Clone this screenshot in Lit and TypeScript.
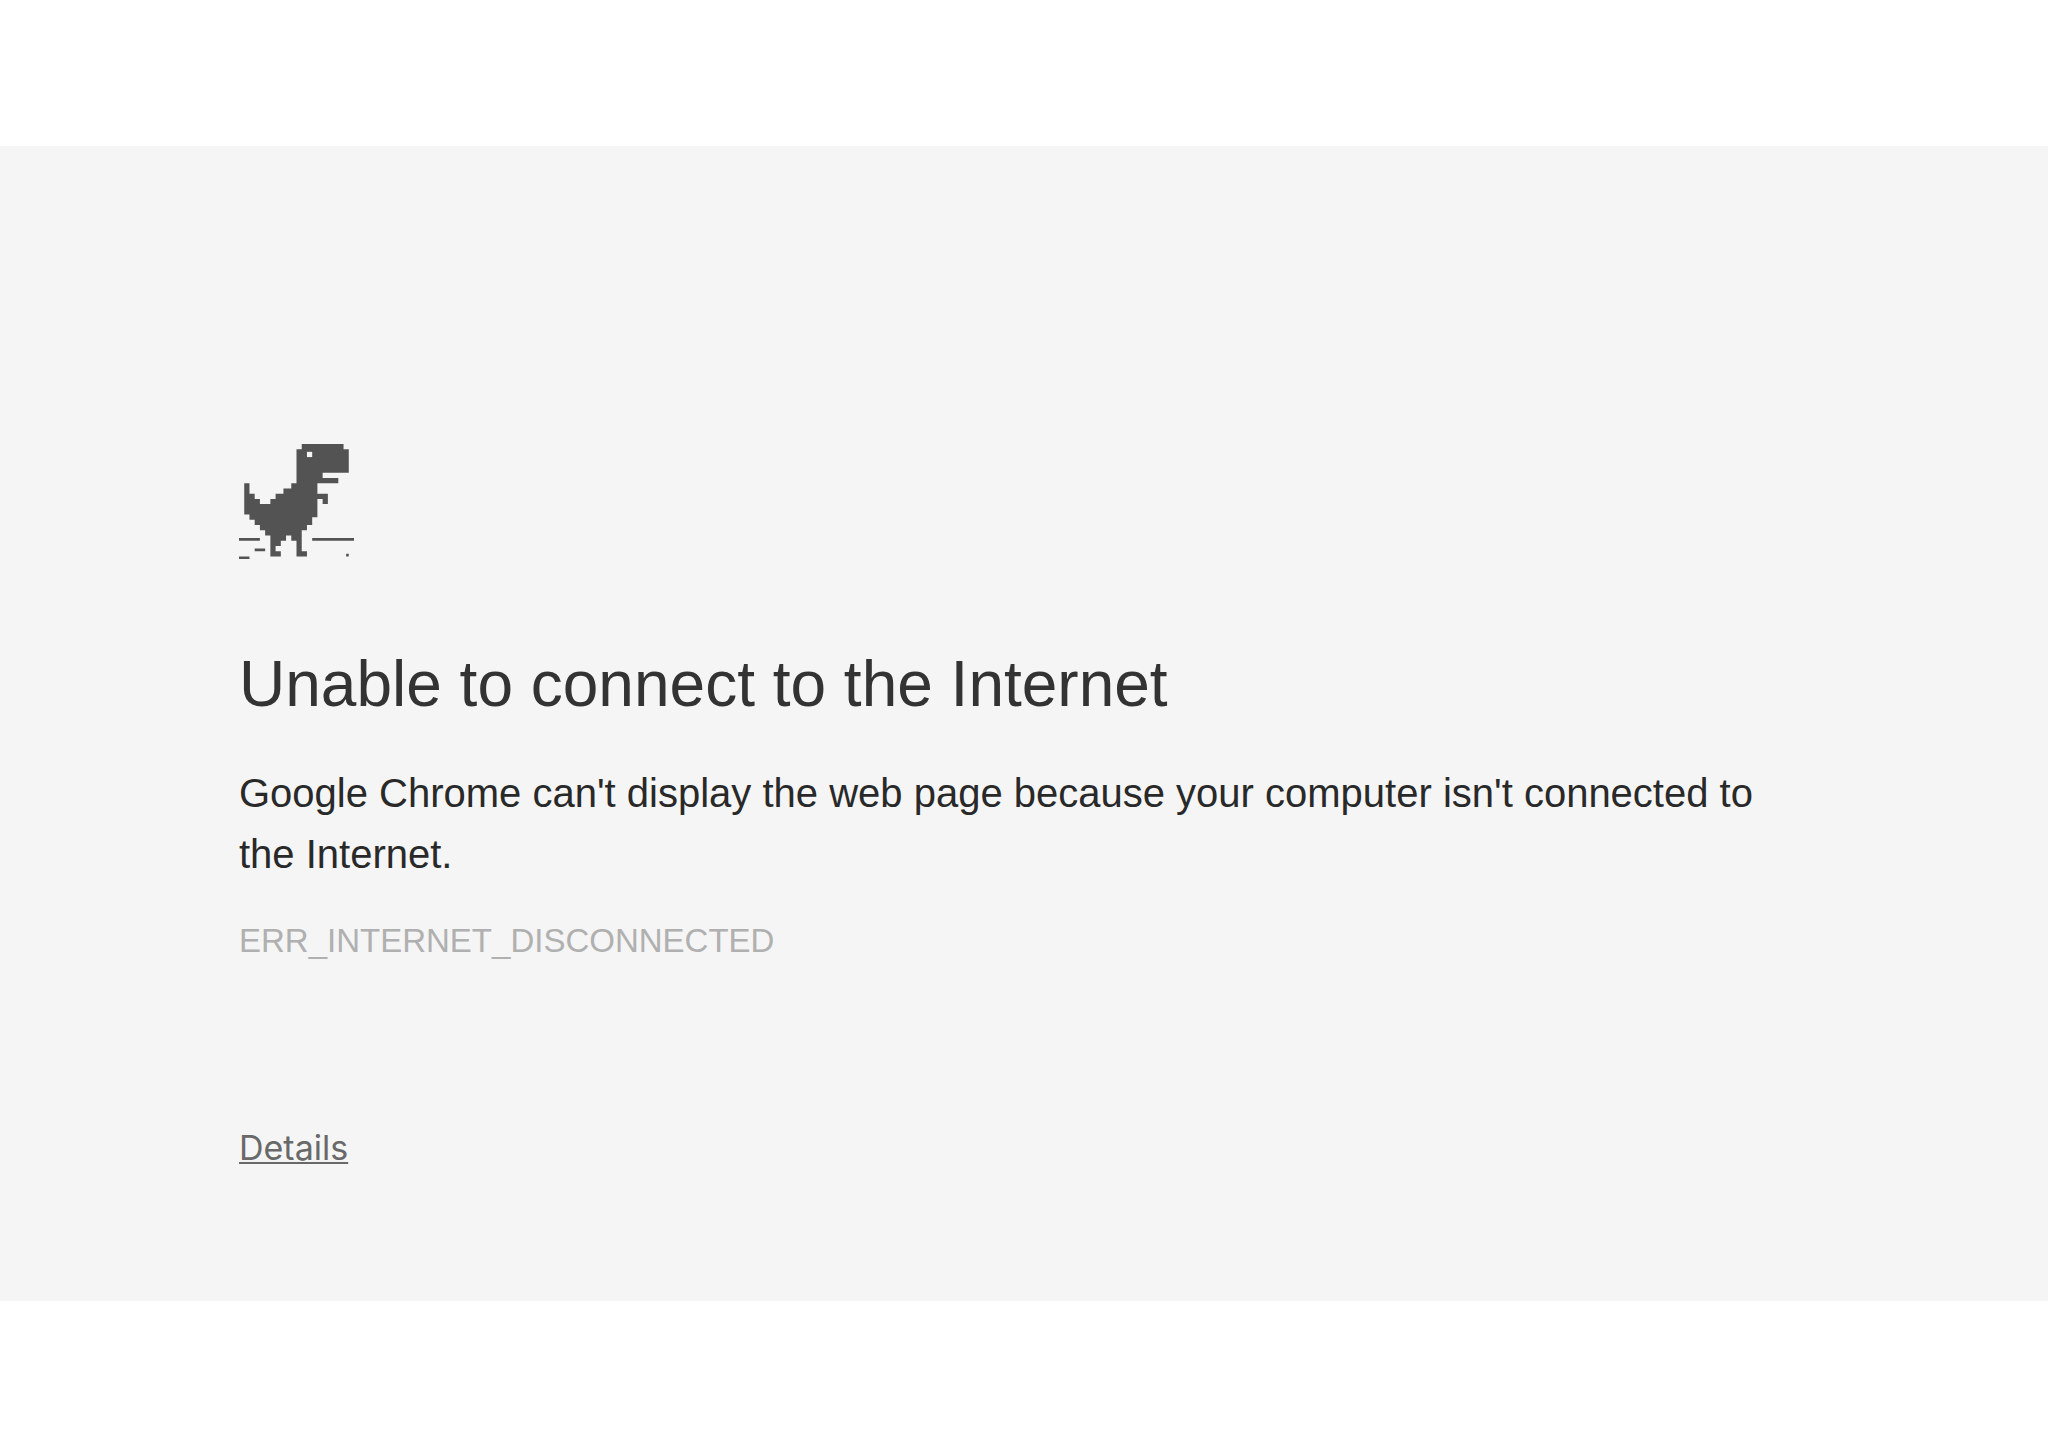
import { LitElement, html, css } from "lit";
import { customElement, state } from "lit/decorators.js";

@customElement("dino-icon")
class DinoIcon extends LitElement {
  static styles = css`
    :host {
      display: block;
      color: #535353;
    }
    .icon {
      display: block;
      width: 115px;
      height: 115px;
      fill: currentColor;
    }
    .eye {
      fill: #f5f5f5;
    }
  `;

  render() {
    return html`
      <svg class="icon" viewBox="0 0 44 44" aria-hidden="true">
        <path
          d="M24 0H40V2H42V11H32V13H38V15H30V19H34V23H32V21H30V28H28V31H26V33H24V41H26V43H22V37H20V35H18V37H16V39H14V41H16V43H12V35H10V33H8V31H6V29H4V27H2V15H4V19H6V21H8V23H12V21H14V19H17V17H20V15H22V2H24Z"
        />
        <path class="eye" d="M26 3h2v2h-2z" />
        <path d="M0 36h8v1H0zM28 36h16v1H28zM6 40h4v1H6zM0 43h4v1H0zM41 42h1v1h-1z" />
      </svg>
    `;
  }
}

@customElement("app-root")
class AppRoot extends LitElement {
  static styles = css`
    :host {
      display: flex;
      flex-direction: column;
      justify-content: center;
      box-sizing: border-box;
      min-height: 100vh;
      background: #ffffff;
      font-family: "Liberation Sans", Arial, Helvetica, sans-serif;
    }
    .band {
      background: #f5f5f5;
      padding: 298px 24px 131px;
    }
    .content {
      max-width: 1570px;
      margin: 0 auto;
    }
    .title {
      margin: 85px 0 0;
      font-size: 64px;
      line-height: 80px;
      font-weight: 400;
      color: #333333;
    }
    .message {
      margin: 39px 0 0;
      font-size: 40px;
      line-height: 61px;
      color: #292929;
    }
    .code {
      margin: 36px 0 0;
      font-size: 33px;
      line-height: 40px;
      color: #b0b0b0;
    }
    .details {
      display: block;
      margin: 165px 0 0;
      padding: 0;
      border: 0;
      background: none;
      font-family: Inter, "Liberation Sans", sans-serif;
      font-size: 34px;
      line-height: 44px;
      color: #696969;
      text-decoration: underline;
      text-decoration-thickness: 2px;
      text-underline-offset: 2px;
      cursor: pointer;
    }
  `;

  @state() private expanded = false;

  render() {
    return html`
      <main class="band">
        <div class="content">
          <dino-icon></dino-icon>
          <h1 class="title">Unable to connect to the Internet</h1>
          <p class="message">
            Google Chrome can't display the web page because your computer isn't connected to the
            Internet.
          </p>
          <p class="code">ERR_INTERNET_DISCONNECTED</p>
          <button
            class="details"
            type="button"
            aria-expanded=${this.expanded ? "true" : "false"}
            @click=${() => (this.expanded = !this.expanded)}
          >Details</button>
        </div>
      </main>
    `;
  }
}
